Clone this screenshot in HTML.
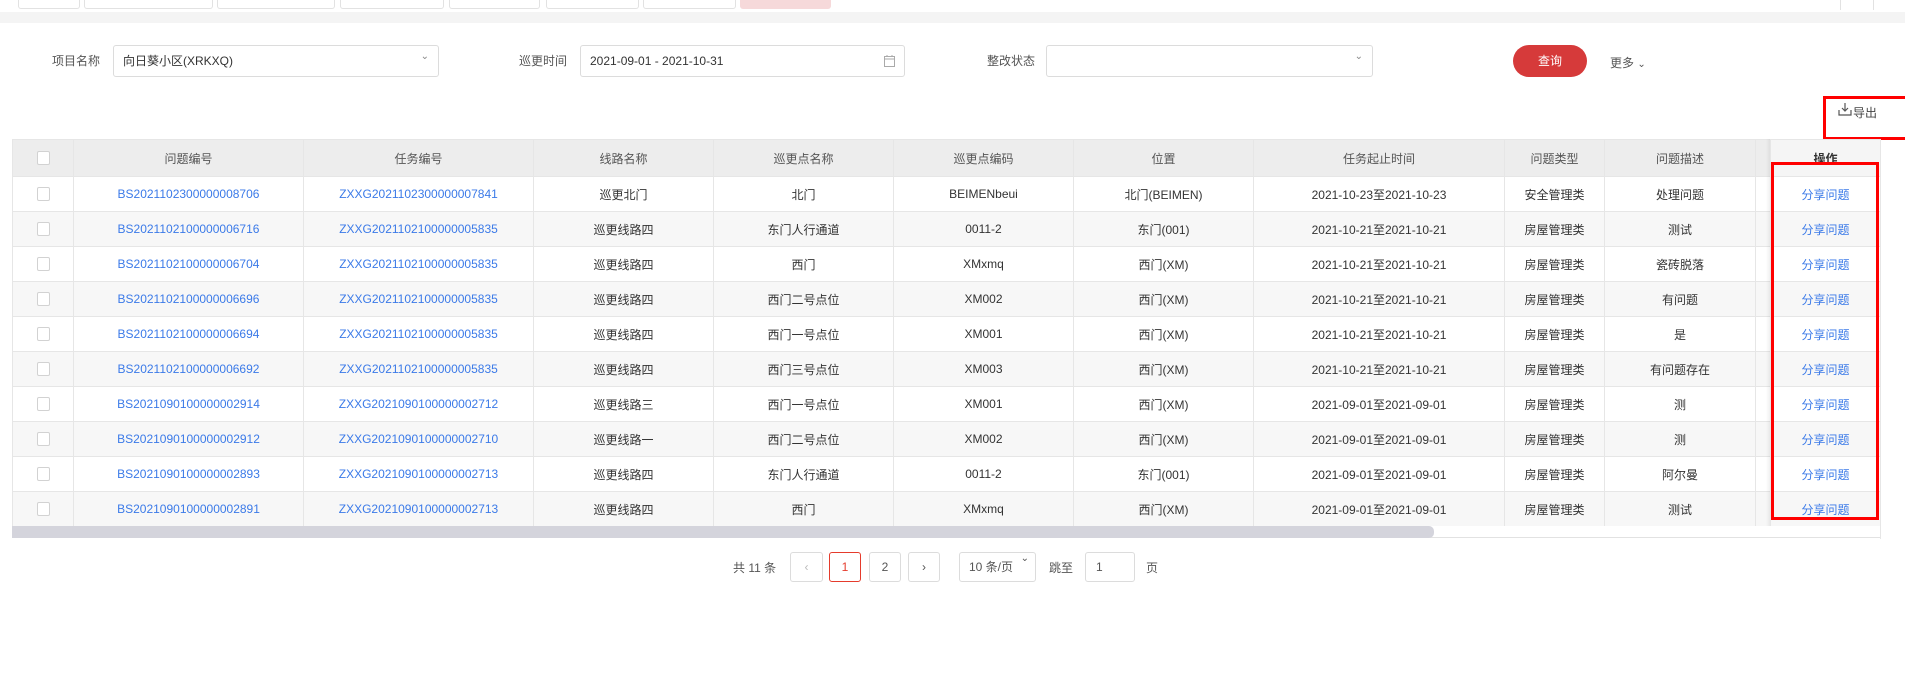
<!DOCTYPE html>
<html><head><meta charset="utf-8"><style>
*{box-sizing:border-box;margin:0;padding:0}
body{width:1905px;height:678px;background:#fff;font-family:"Liberation Sans","Noto Sans CJK SC",sans-serif;font-size:12px;color:#333;position:relative;overflow:hidden}
.a{position:absolute}
.tab{position:absolute;top:0;height:9px;border:1px solid #e2e2e2;border-top:none;border-radius:0 0 3px 3px;background:#fff}
.inp{position:absolute;top:45px;height:32px;border:1px solid #dcdcdc;border-radius:3px;background:#fff;padding-left:9px;line-height:30px;font-size:12px;color:#333}
.lbl{position:absolute;top:52px;font-size:12px;color:#555}
table{border-collapse:collapse;table-layout:fixed;position:absolute;left:12px;top:139px}
td,th{border:1px solid #e6e6e6;text-align:center;font-size:12px;height:35px;white-space:nowrap;overflow:hidden}
th{height:37px;background:#ededed;font-weight:normal;color:#555}
tr:nth-child(odd) td{background:#f7f7f7}
tr:nth-child(even) td{background:#fff}
td.l{color:#3b7ae8}
.cb{display:inline-block;width:13px;height:14px;border:1px solid #d2d2d2;border-radius:2px;background:#fff;vertical-align:middle}
.pb{position:absolute;top:552px;height:30px;border:1px solid #dcdcdc;border-radius:3px;text-align:center;line-height:28px;font-size:12px;color:#555;background:#fff}
</style></head><body>
<div class="a" style="left:0;top:0;width:1905px;height:12px;background:#fff"></div>
<div class="tab" style="left:18px;width:62px"></div>
<div class="tab" style="left:84px;width:129px"></div>
<div class="tab" style="left:217px;width:118px"></div>
<div class="tab" style="left:340px;width:104px"></div>
<div class="tab" style="left:449px;width:91px"></div>
<div class="tab" style="left:546px;width:93px"></div>
<div class="tab" style="left:643px;width:93px"></div>
<div class="a" style="left:740px;top:0;width:91px;height:9px;background:#f6d9da;border-radius:0 0 3px 3px"></div>
<div class="a" style="left:1840px;top:0;width:1px;height:10px;background:#e2e2e2"></div>
<div class="a" style="left:1873px;top:0;width:1px;height:10px;background:#e2e2e2"></div>
<div class="a" style="left:0;top:12px;width:1905px;height:11px;background:#f4f4f4"></div>

<div class="lbl" style="left:52px">项目名称</div>
<div class="inp" style="left:113px;width:326px">向日葵小区(XRKXQ)<span class="a" style="right:9px;top:-4px;color:#888;font-size:10px">&#8964;</span></div>
<div class="lbl" style="left:519px">巡更时间</div>
<div class="inp" style="left:580px;width:325px">2021-09-01 - 2021-10-31
<svg class="a" style="right:9px;top:9px" width="11" height="12" viewBox="0 0 11 12"><rect x="0.5" y="1.5" width="10" height="10" fill="none" stroke="#aaa"/><line x1="0.5" y1="4" x2="10.5" y2="4" stroke="#aaa"/><line x1="3" y1="0" x2="3" y2="2" stroke="#aaa"/><line x1="8" y1="0" x2="8" y2="2" stroke="#aaa"/></svg></div>
<div class="lbl" style="left:987px">整改状态</div>
<div class="inp" style="left:1046px;width:327px"><span class="a" style="right:9px;top:-4px;color:#888;font-size:10px">&#8964;</span></div>
<div class="a" style="left:1513px;top:45px;width:74px;height:32px;background:#d63a3a;border-radius:16px;color:#fff;text-align:center;line-height:32px;font-size:12px">查询</div>
<div class="a" style="left:1610px;top:54px;font-size:12px;color:#555">更多 <span style="font-size:10px">&#8964;</span></div>

<svg class="a" style="left:1838px;top:102px" width="14" height="14" viewBox="0 0 14 14"><path d="M7 1v8M4 6l3 3 3-3M1 8v5h12V8" fill="none" stroke="#555" stroke-width="1.2"/></svg>
<div class="a" style="left:1853px;top:104px;font-size:12px;color:#444">导出</div>
<div class="a" style="left:1823px;top:96px;width:85px;height:44px;border:3px solid #f00"></div>

<table>
<colgroup><col style="width:61px"><col style="width:230px"><col style="width:230px"><col style="width:180px"><col style="width:180px"><col style="width:180px"><col style="width:180px"><col style="width:251px"><col style="width:100px"><col style="width:151px"><col style="width:15px"><col style="width:110px"></colgroup>
<tr><th><span class="cb"></span></th><th>问题编号</th><th>任务编号</th><th>线路名称</th><th>巡更点名称</th><th>巡更点编码</th><th>位置</th><th>任务起止时间</th><th>问题类型</th><th>问题描述</th><th></th><th style="background:#f5f5f5;color:#333;font-weight:bold">操作</th></tr>
<tr><td><span class="cb"></span></td><td class="l">BS2021102300000008706</td><td class="l">ZXXG2021102300000007841</td><td>巡更北门</td><td>北门</td><td>BEIMENbeui</td><td>北门(BEIMEN)</td><td>2021-10-23至2021-10-23</td><td>安全管理类</td><td>处理问题</td><td></td><td class="l">分享问题</td></tr>
<tr><td><span class="cb"></span></td><td class="l">BS2021102100000006716</td><td class="l">ZXXG2021102100000005835</td><td>巡更线路四</td><td>东门人行通道</td><td>0011-2</td><td>东门(001)</td><td>2021-10-21至2021-10-21</td><td>房屋管理类</td><td>测试</td><td></td><td class="l">分享问题</td></tr>
<tr><td><span class="cb"></span></td><td class="l">BS2021102100000006704</td><td class="l">ZXXG2021102100000005835</td><td>巡更线路四</td><td>西门</td><td>XMxmq</td><td>西门(XM)</td><td>2021-10-21至2021-10-21</td><td>房屋管理类</td><td>瓷砖脱落</td><td></td><td class="l">分享问题</td></tr>
<tr><td><span class="cb"></span></td><td class="l">BS2021102100000006696</td><td class="l">ZXXG2021102100000005835</td><td>巡更线路四</td><td>西门二号点位</td><td>XM002</td><td>西门(XM)</td><td>2021-10-21至2021-10-21</td><td>房屋管理类</td><td>有问题</td><td></td><td class="l">分享问题</td></tr>
<tr><td><span class="cb"></span></td><td class="l">BS2021102100000006694</td><td class="l">ZXXG2021102100000005835</td><td>巡更线路四</td><td>西门一号点位</td><td>XM001</td><td>西门(XM)</td><td>2021-10-21至2021-10-21</td><td>房屋管理类</td><td>是</td><td></td><td class="l">分享问题</td></tr>
<tr><td><span class="cb"></span></td><td class="l">BS2021102100000006692</td><td class="l">ZXXG2021102100000005835</td><td>巡更线路四</td><td>西门三号点位</td><td>XM003</td><td>西门(XM)</td><td>2021-10-21至2021-10-21</td><td>房屋管理类</td><td>有问题存在</td><td></td><td class="l">分享问题</td></tr>
<tr><td><span class="cb"></span></td><td class="l">BS2021090100000002914</td><td class="l">ZXXG2021090100000002712</td><td>巡更线路三</td><td>西门一号点位</td><td>XM001</td><td>西门(XM)</td><td>2021-09-01至2021-09-01</td><td>房屋管理类</td><td>测</td><td></td><td class="l">分享问题</td></tr>
<tr><td><span class="cb"></span></td><td class="l">BS2021090100000002912</td><td class="l">ZXXG2021090100000002710</td><td>巡更线路一</td><td>西门二号点位</td><td>XM002</td><td>西门(XM)</td><td>2021-09-01至2021-09-01</td><td>房屋管理类</td><td>测</td><td></td><td class="l">分享问题</td></tr>
<tr><td><span class="cb"></span></td><td class="l">BS2021090100000002893</td><td class="l">ZXXG2021090100000002713</td><td>巡更线路四</td><td>东门人行通道</td><td>0011-2</td><td>东门(001)</td><td>2021-09-01至2021-09-01</td><td>房屋管理类</td><td>阿尔曼</td><td></td><td class="l">分享问题</td></tr>
<tr><td><span class="cb"></span></td><td class="l">BS2021090100000002891</td><td class="l">ZXXG2021090100000002713</td><td>巡更线路四</td><td>西门</td><td>XMxmq</td><td>西门(XM)</td><td>2021-09-01至2021-09-01</td><td>房屋管理类</td><td>测试</td><td></td><td class="l">分享问题</td></tr>
</table>
<div class="a" style="left:1766px;top:139px;width:4px;height:387px;background:linear-gradient(to right,rgba(0,0,0,0),rgba(0,0,0,0.06))"></div>
<div class="a" style="left:1880px;top:139px;width:1px;height:400px;background:#e6e6e6"></div>
<div class="a" style="left:12px;top:526px;width:1868px;height:12px;background:#fff;border-bottom:1px solid #e2e2e2"></div>
<div class="a" style="left:12px;top:526px;width:1422px;height:12px;background:#d4d4dc;border-radius:0 5px 5px 0"></div>
<div class="a" style="left:1771px;top:162px;width:108px;height:358px;border:3px solid #f00"></div>

<div class="a" style="left:733px;top:559px;color:#555">共 11 条</div>
<div class="pb" style="left:790px;width:33px;color:#bbb">&lsaquo;</div>
<div class="pb" style="left:829px;width:32px;border-color:#e53b2c;color:#e53b2c">1</div>
<div class="pb" style="left:869px;width:32px">2</div>
<div class="pb" style="left:908px;width:32px">&rsaquo;</div>
<div class="pb" style="left:959px;width:77px;text-align:left;padding-left:9px">10 条/页<span class="a" style="right:6px;top:-8px;font-size:10px">&#8964;</span></div>
<div class="a" style="left:1049px;top:559px;color:#555">跳至</div>
<div class="pb" style="left:1085px;width:50px;text-align:left;padding-left:10px">1</div>
<div class="a" style="left:1146px;top:559px;color:#555">页</div>
</body></html>
